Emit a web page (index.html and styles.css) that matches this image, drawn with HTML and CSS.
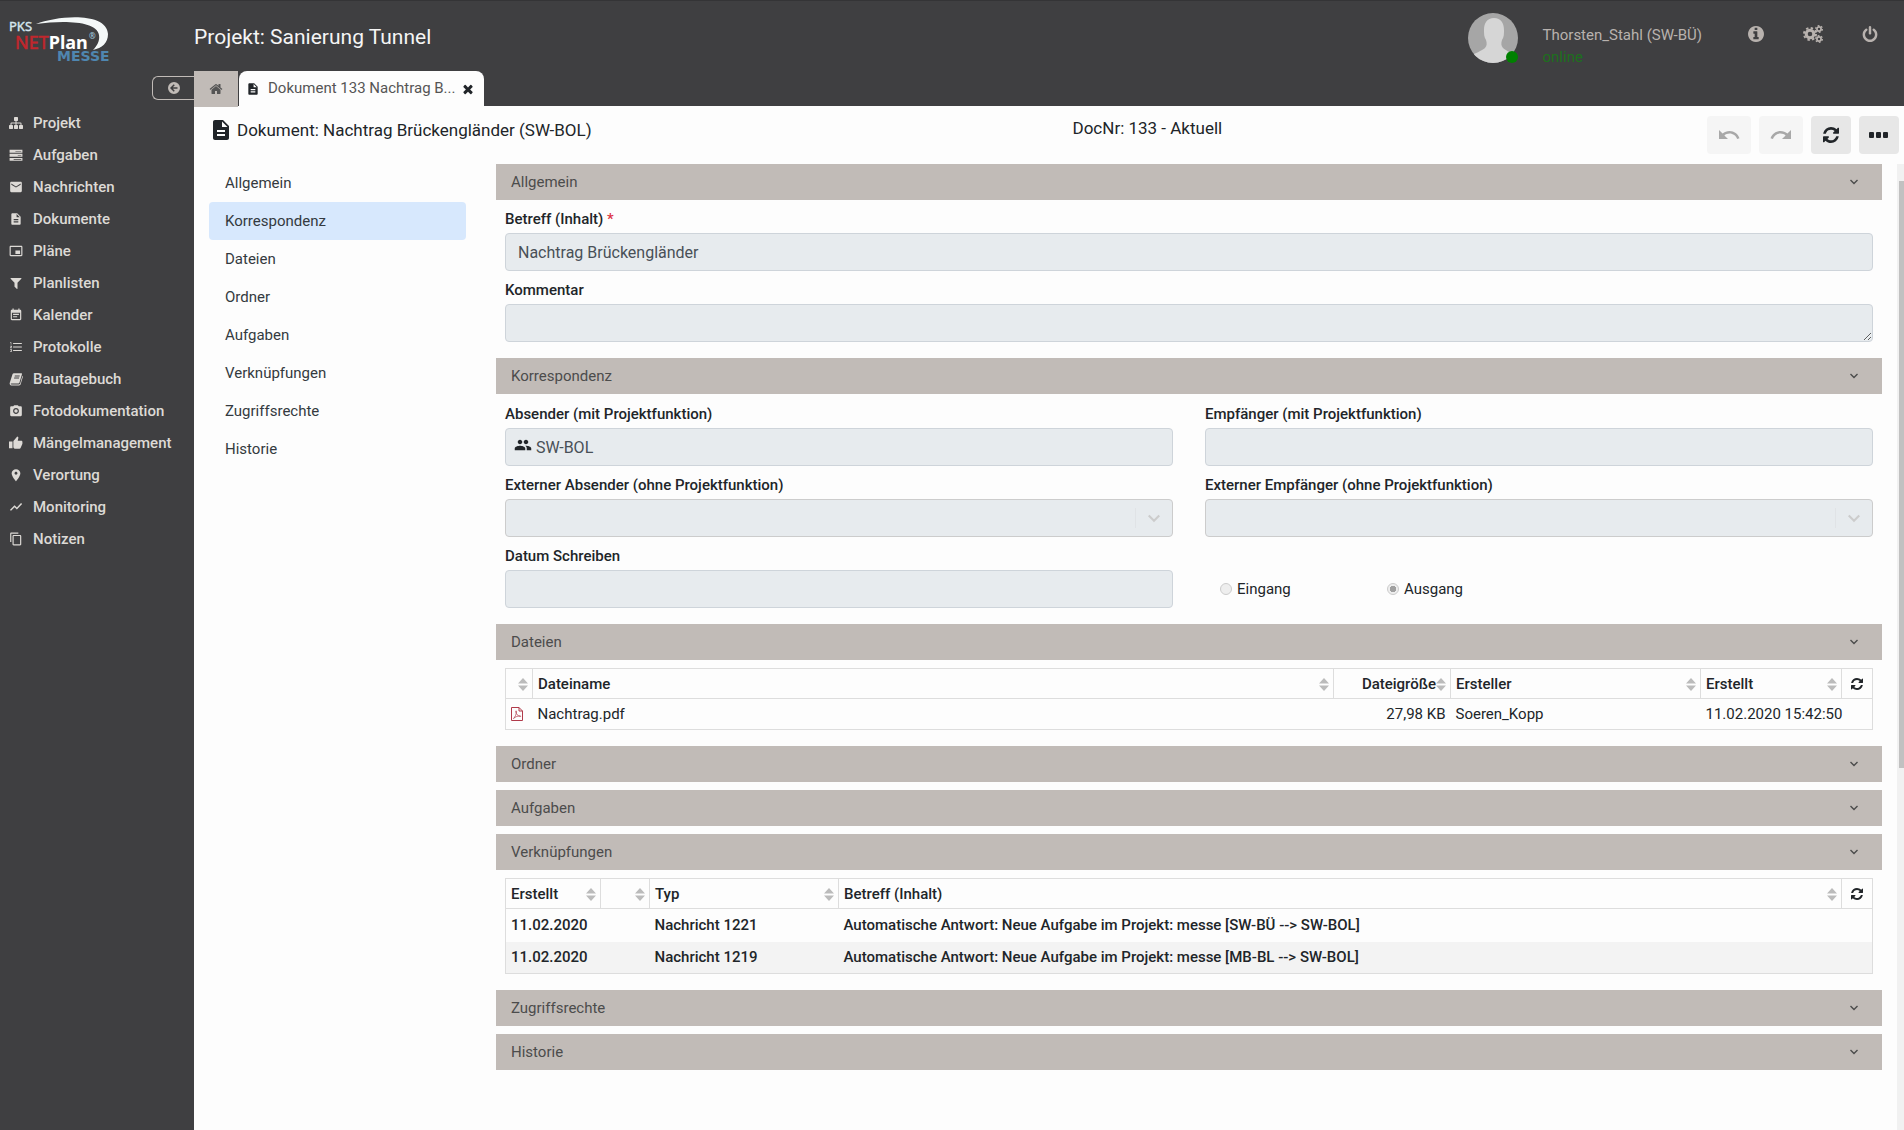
FILE: index.html
```html
<!DOCTYPE html>
<html lang="de">
	<head>
		<meta charset="UTF-8" />
		<meta name="viewport" content="width=device-width, initial-scale=1.0" />
		<title>Projekt: Sanierung Tunnel</title>
		<link rel="stylesheet" href="styles.css">
	</head>
	<body>
		<svg class="sprite" aria-hidden="true">
			<symbol id="sitemap" viewBox="0 0 1792 1792"><path d="M1792 1248v320q0 40-28 68t-68 28h-320q-40 0-68-28t-28-68v-320q0-40 28-68t68-28h96v-192h-512v192h96q40 0 68 28t28 68v320q0 40-28 68t-68 28h-320q-40 0-68-28t-28-68v-320q0-40 28-68t68-28h96v-192h-512v192h96q40 0 68 28t28 68v320q0 40-28 68t-68 28h-320q-40 0-68-28t-28-68v-320q0-40 28-68t68-28h96v-192q0-52 38-90t90-38h512v-192h-96q-40 0-68-28t-28-68v-320q0-40 28-68t68-28h320q40 0 68 28t28 68v320q0 40-28 68t-68 28h-96v192h512q52 0 90 38t38 90v192h96q40 0 68 28t28 68z" /></symbol>
			<symbol id="server" viewBox="0 0 24 24"><path fill-rule="evenodd" d="M1 3h22v5H1zM11 5h10v1H11zM1 10h22v5H1zM15 12h6v1h-6zM1 17h22v5H1zM8 19h13v1H8z" /></symbol>
			<symbol id="mail" viewBox="0 0 24 24"><path d="M20 3H4c-1.100 0-2 .9-2 2v14c0 1.100.9 2 2 2h16c1.100 0 2-.9 2-2V5c0-1.100-.9-2-2-2zm0 5l-8 5-8-5V6l8 5 8-5v2z" /></symbol>
			<symbol id="doc" viewBox="0 0 24 24"><path d="M14 2H6c-1.100 0-1.990.9-1.990 2L4 20c0 1.100.89 2 1.990 2H18c1.100 0 2-.9 2-2V8l-6-6zm2 16H8v-2h8v2zm0-4H8v-2h8v2zm-3-5V3.500L18.500 9H13z" /></symbol>
			<symbol id="plan" viewBox="0 0 24 24"><path d="M19 11h-8v6h8v-6zm4 8V4.980C23 3.880 22.100 3 21 3H3c-1.100 0-2 .88-2 1.980V19c0 1.100.9 2 2 2h18c1.100 0 2-.9 2-2zm-2 .02H3V4.970h18v14.050z" /></symbol>
			<symbol id="filter" viewBox="0 0 1792 1792"><path d="M1595 295q17 41-14 70l-493 493v742q0 42-39 59-13 5-25 5-27 0-45-19l-256-256q-19-19-19-45v-486l-493-493q-31-29-14-70 17-39 59-39h1280q42 0 59 39z" /></symbol>
			<symbol id="calendar" viewBox="0 0 24 24"><path d="M17 10H7v2h10v-2zm2-7h-1V1h-2v2H8V1H6v2H5c-1.110 0-1.990.9-1.990 2L3 19c0 1.100.89 2 2 2h14c1.100 0 2-.9 2-2V5c0-1.100-.9-2-2-2zm0 16H5V8h14v11zm-5-5H7v2h7v-2z" /></symbol>
			<symbol id="list" viewBox="0 0 24 24"><path d="M7 5h15v2H7zM7 11h15v2H7zM7 17h15v2H7zM2 4h2v4H3V5H2zM2 10h3v1.500L3.500 13H5v1H2v-1l1.500-2H2zM2 16h3v4H2v-1h2v-.5H3v-1h1V17H2z" /></symbol>
			<symbol id="book" viewBox="0 0 24 24"><path fill-rule="evenodd" d="M8.500 2H21c1 0 1.500.8 1.200 1.700L18 18c-.3 1-1 1.500-2 1.500H4c-.9 0-1.200.5-1 1 .2.600.7.800 1.300.800h13c.9 0 1.500-.5 1.800-1.400L23 6.500c.7.500.9 1.200.7 2L20 21c-.4 1.300-1.400 2-2.700 2H4c-2 0-3.400-2-2.800-4L6 4c.4-1.300 1.200-2 2.500-2zM10 6l-.4 1.500h8.500l.4-1.500zM9 9.500L8.600 11h8.500l.4-1.500z" /></symbol>
			<symbol id="camera" viewBox="0 0 24 24"><circle cx="12" cy="12" r="3" /><path d="M9 2L7.170 4H4c-1.100 0-2 .9-2 2v13c0 1.100.9 2 2 2h16c1.100 0 2-.9 2-2V6c0-1.100-.9-2-2-2h-3.170L15 2H9zm3 15c-2.760 0-5-2.240-5-5s2.240-5 5-5 5 2.240 5 5-2.240 5-5 5z" /></symbol>
			<symbol id="thumb" viewBox="0 0 24 24"><path d="M0 21h6V9.500H0V21zm23-11c0-1.100-.9-2-2-2h-6l1-4.570c.1-1-.1-1.400-.4-1.700L14.170 1 8 8c-.4.400-.5.800-.5 1.400V19c0 1.500.9 2.500 2.500 3h8c.83 0 1.540-.5 1.840-1.220l3.020-7.050c.09-.23.14-.47.14-.73v-3z" /></symbol>
			<symbol id="place" viewBox="0 0 24 24"><path d="M12 2C8 2 4.500 5.130 4.500 9.200 4.500 14.500 12 23 12 23s7.500-8.500 7.500-13.800C19.500 5.130 16 2 12 2zm0 9.500c-1.380 0-2.500-1.120-2.500-2.500s1.120-2.500 2.500-2.500 2.500 1.120 2.500 2.500-1.120 2.500-2.500 2.500z" /></symbol>
			<symbol id="chart" viewBox="0 0 24 24"><path d="M3.500 18.490l6-6.010 4 4L22.500 6.920l-1.910-1.910-7.090 7.970-4-4L1.500 16.990z" /></symbol>
			<symbol id="copy" viewBox="0 0 24 24"><path d="M16 1H4c-1.100 0-2 .9-2 2v14h2V3h12V1zm3 4H8c-1.100 0-2 .9-2 2v14c0 1.100.9 2 2 2h11c1.100 0 2-.9 2-2V7c0-1.100-.9-2-2-2zm0 16H8V7h11v14z" /></symbol>
			<symbol id="back" viewBox="0 0 24 24"><path fill-rule="evenodd" d="M12 0a12 12 0 1 1 0 24a12 12 0 1 1 0-24zM4 12l7.500 7.500 2-2-3.800-3.900H19v-3.200H9.700l3.800-3.900-2-2z" /></symbol>
			<symbol id="home" viewBox="0 0 1792 1792"><path d="M1472 992v480q0 26-19 45t-45 19h-384v-384h-256v384h-384q-26 0-45-19t-19-45v-480q0-1 .5-3t.5-3l575-474 575 474q1 2 1 6zm223-69l-62 74q-8 9-21 11h-3q-13 0-21-7l-692-577-692 577q-12 8-24 7-13-2-21-11l-62-74q-8-10-7-23.500t11-21.500l719-599q32-26 76-26t76 26l244 204v-195q0-14 9-23t23-9h192q14 0 23 9t9 23v408l219 182q10 8 11 21.500t-7 23.500z" /></symbol>
			<symbol id="times" viewBox="0 0 1792 1792"><path d="M1490 1322q0 40-28 68l-136 136q-28 28-68 28t-68-28l-294-294-294 294q-28 28-68 28t-68-28l-136-136q-28-28-28-68t28-68l294-294-294-294q-28-28-28-68t28-68l136-136q28-28 68-28t68 28l294 294 294-294q28-28 68-28t68 28l136 136q28 28 28 68t-28 68l-294 294 294 294q28 28 28 68z" /></symbol>
			<symbol id="info" viewBox="128 128 1536 1536"><path d="M1152 1376v-160q0-14-9-23t-23-9h-96v-512q0-14-9-23t-23-9h-320q-14 0-23 9t-9 23v160q0 14 9 23t23 9h96v320h-96q-14 0-23 9t-9 23v160q0 14 9 23t23 9h448q14 0 23-9t9-23zm-128-896v-160q0-14-9-23t-23-9h-192q-14 0-23 9t-9 23v160q0 14 9 23t23 9h192q14 0 23-9t9-23zm640 416q0 209-103 385.500t-279.500 279.500-385.500 103-385.500-103-279.500-279.500-103-385.500 103-385.500 279.500-279.500 385.500-103 385.500 103 279.500 279.500 103 385.500z" /></symbol>
			<symbol id="cogs" viewBox="0 0 20 18">
				<g fill="none" stroke="currentColor">
					<circle cx="7" cy="9" r="3.800" stroke-width="3" />
					<circle cx="7" cy="9" r="6" stroke-width="2" stroke-dasharray="2.400 2.310" />
					<circle cx="16" cy="4" r="2.100" stroke-width="1.700" />
					<circle cx="16" cy="4" r="3.400" stroke-width="1.200" stroke-dasharray="1.800 1.760" />
					<circle cx="16" cy="14" r="2.100" stroke-width="1.700" />
					<circle cx="16" cy="14" r="3.400" stroke-width="1.200" stroke-dasharray="1.800 1.760" />
				</g>
			</symbol>
			<symbol id="power" viewBox="128 0 1536 1664"><path d="M1664 896q0 156-61 298t-164 245-245 164-298 61-298-61-245-164-164-245-61-298q0-182 80.500-343t226.500-270q43-32 95.500-25t83.500 50q32 42 24.500 94.500t-49.500 84.500q-98 74-151.500 181t-53.500 228q0 104 40.500 198.500t109.500 163.500 163.500 109.500 198.500 40.500 198.500-40.500 163.500-109.500 109.500-163.500 40.500-198.500q0-121-53.500-228t-151.500-181q-42-32-49.500-84.500t24.500-94.500q31-43 84-50t95 25q146 109 226.500 270t80.500 343zm-640-768v640q0 52-38 90t-90 38-90-38-38-90v-640q0-52 38-90t90-38 90 38 38 90z" /></symbol>
			<symbol id="undo" viewBox="0 0 24 24"><path d="M12.500 8c-2.650 0-5.050.99-6.900 2.600L2 7v9h9l-3.620-3.620c1.390-1.160 3.160-1.880 5.120-1.880 3.540 0 6.550 2.310 7.600 5.500l2.370-.78C21.080 11.030 17.150 8 12.500 8z" /></symbol>
			<symbol id="redo" viewBox="0 0 24 24"><path d="M18.400 10.600C16.550 8.990 14.150 8 11.500 8c-4.650 0-8.580 3.030-9.960 7.220L3.900 16c1.050-3.190 4.050-5.500 7.600-5.500 1.950 0 3.730.72 5.120 1.880L13 16h9V7l-3.600 3.600z" /></symbol>
			<symbol id="refresh" viewBox="128 128 1536 1536"><path d="M1639 1056q0 5-1 7-64 268-268 434.500t-478 166.500q-146 0-282.500-55t-243.500-157l-129 129q-19 19-45 19t-45-19-19-45v-448q0-26 19-45t45-19h448q26 0 45 19t19 45-19 45l-137 137q71 66 161 102t187 36q134 0 250-65t186-179q11-17 53-117 8-23 30-23h192q13 0 22.500 9.500t9.500 22.500zm25-800v448q0 26-19 45t-45 19h-448q-26 0-45-19t-19-45 19-45l138-138q-148-137-349-137-134 0-250 65t-186 179q-11 17-53 117-8 23-30 23h-199q-13 0-22.500-9.500t-9.500-22.500v-7q65-268 270-434.500t480-166.500q146 0 284 55.500t245 156.500l130-129q19-19 45-19t45 19 19 45z" /></symbol>
			<symbol id="dots" viewBox="0 0 20 6"><rect x="0" y="0" width="5" height="6" rx="1" /><rect x="7" y="0" width="5" height="6" rx="1" /><rect x="14" y="0" width="5" height="6" rx="1" /></symbol>
			<symbol id="chevron" viewBox="0 0 8 6"><path fill="none" stroke="currentColor" stroke-width="1.400" d="M.5 1L4 4.500 7.500 1" /></symbol>
			<symbol id="sort" viewBox="0 0 10 13"><path d="M5 0l5 5.500H0zM5 13l5-5.500H0z" /></symbol>
			<symbol id="group" viewBox="0 4 24 16"><path d="M16 11c1.660 0 2.990-1.340 2.990-3S17.660 5 16 5c-1.660 0-3 1.340-3 3s1.340 3 3 3zm-8 0c1.660 0 2.990-1.340 2.990-3S9.660 5 8 5C6.340 5 5 6.340 5 8s1.340 3 3 3zm0 2c-2.330 0-7 1.170-7 3.500V19h14v-2.500c0-2.330-4.670-3.500-7-3.500zm8 0c-.29 0-.62.02-.97.05 1.160.84 1.970 1.970 1.970 3.450V19h6v-2.500c0-2.330-4.670-3.500-7-3.500z" /></symbol>
			<symbol id="pdf" viewBox="0 0 12 14"><path fill="none" stroke="currentColor" d="M.5.5h7.500L11.500 4v9.500H.5zM8 .5V4h3.500" /><path fill="none" stroke="currentColor" stroke-width=".7" d="M2.500 11.500C4 10 5.500 7 5.500 4.500c0-1-1-1-.8 0C5 7 7 9 9 9.500c1 .2 1-.7 0-.7-2 0-4.500.9-6.500 2.700z" /></symbol>
		</svg>

		<div class="app">
			<aside class="sidebar">
				<svg class="logo" viewBox="0 0 102 48" role="img" aria-label="PKS NETPlan Messe">
					<path fill="#f4f8f8" d="M27 8C50-1 98-4 99 18c0 9-6 14-15 16 4-4 7-9 6-15C88 5 55 4 27 8z" />
					<text class="logo-pks" x="0" y="15">PKS</text>
					<text class="logo-net" x="6" y="33">NET<tspan class="logo-plan">Plan</tspan></text>
					<text class="logo-reg" x="80" y="23">®</text>
					<text class="logo-messe" x="48" y="45">MESSE</text>
				</svg>
				<button class="collapse" type="button" aria-label="Menü einklappen"><svg class="i12"><use href="#back" /></svg></button>
				<nav class="menu">
					<a href="#" class="menu-item"><svg class="menu-icon"><use href="#sitemap" /></svg>Projekt</a>
					<a href="#" class="menu-item"><svg class="menu-icon"><use href="#server" /></svg>Aufgaben</a>
					<a href="#" class="menu-item"><svg class="menu-icon"><use href="#mail" /></svg>Nachrichten</a>
					<a href="#" class="menu-item"><svg class="menu-icon"><use href="#doc" /></svg>Dokumente</a>
					<a href="#" class="menu-item"><svg class="menu-icon"><use href="#plan" /></svg>Pläne</a>
					<a href="#" class="menu-item"><svg class="menu-icon"><use href="#filter" /></svg>Planlisten</a>
					<a href="#" class="menu-item"><svg class="menu-icon"><use href="#calendar" /></svg>Kalender</a>
					<a href="#" class="menu-item"><svg class="menu-icon"><use href="#list" /></svg>Protokolle</a>
					<a href="#" class="menu-item"><svg class="menu-icon"><use href="#book" /></svg>Bautagebuch</a>
					<a href="#" class="menu-item"><svg class="menu-icon"><use href="#camera" /></svg>Fotodokumentation</a>
					<a href="#" class="menu-item"><svg class="menu-icon"><use href="#thumb" /></svg>Mängelmanagement</a>
					<a href="#" class="menu-item"><svg class="menu-icon"><use href="#place" /></svg>Verortung</a>
					<a href="#" class="menu-item"><svg class="menu-icon"><use href="#chart" /></svg>Monitoring</a>
					<a href="#" class="menu-item"><svg class="menu-icon"><use href="#copy" /></svg>Notizen</a>
				</nav>
			</aside>

			<div class="main">
				<header class="topbar">
					<h1 class="project">Projekt: Sanierung Tunnel</h1>
					<div class="user">
						<div class="avatar">
							<svg class="avatar-in" viewBox="0 0 50 50"><path fill="#d6d6d6" d="M0 50V44c7-4 14-6 17-9 2-2 2-5 1-8-2-3-2-6-2-10C16 10 19 5 26 5s10 5 10 12c0 4 0 7-2 10-1 3-1 6 1 8 3 3 9 5 15 9v6z" /></svg>
							<span class="avatar-status"></span>
						</div>
						<div class="user-text">
							<div class="user-name">Thorsten_Stahl (SW-BÜ)</div>
							<div class="user-state">online</div>
						</div>
					</div>
					<div class="tools">
						<button type="button" class="tool" aria-label="Info"><svg class="i16"><use href="#info" /></svg></button>
						<button type="button" class="tool" aria-label="Einstellungen"><svg class="i20"><use href="#cogs" /></svg></button>
						<button type="button" class="tool" aria-label="Abmelden"><svg class="i16"><use href="#power" /></svg></button>
					</div>
				</header>
				<div class="tabs">
					<a href="#" class="tab-home" aria-label="Start"><svg class="i14"><use href="#home" /></svg></a>
					<div class="tab">
						<svg class="i14"><use href="#doc" /></svg>
						<span class="tab-text">Dokument 133 Nachtrag B...</span>
						<button type="button" class="tab-close" aria-label="Schließen"><svg class="i14"><use href="#times" /></svg></button>
					</div>
				</div>

				<div class="page">
					<div class="dochead">
						<h2 class="doc-title"><svg class="i24"><use href="#doc" /></svg>Dokument: Nachtrag Brückengländer (SW-BOL)</h2>
						<div class="doc-nr">DocNr: 133 - Aktuell</div>
						<div class="actions">
							<button type="button" class="action wide" disabled aria-label="Rückgängig"><svg class="i24"><use href="#undo" /></svg></button>
							<button type="button" class="action wide" disabled aria-label="Wiederholen"><svg class="i24"><use href="#redo" /></svg></button>
							<button type="button" class="action" aria-label="Aktualisieren"><svg class="i16"><use href="#refresh" /></svg></button>
							<button type="button" class="action" aria-label="Mehr"><svg class="i20"><use href="#dots" /></svg></button>
						</div>
					</div>

					<div class="content">
						<nav class="subnav">
							<a href="#allgemein" class="subnav-item">Allgemein</a>
							<a href="#korrespondenz" class="subnav-item active">Korrespondenz</a>
							<a href="#dateien" class="subnav-item">Dateien</a>
							<a href="#ordner" class="subnav-item">Ordner</a>
							<a href="#aufgaben" class="subnav-item">Aufgaben</a>
							<a href="#verknuepfungen" class="subnav-item">Verknüpfungen</a>
							<a href="#zugriffsrechte" class="subnav-item">Zugriffsrechte</a>
							<a href="#historie" class="subnav-item">Historie</a>
						</nav>

						<div class="sections">
							<section class="section" id="allgemein">
								<button type="button" class="section-head">Allgemein<svg class="chevron"><use href="#chevron" /></svg></button>
								<div class="section-body">
									<div class="field">
										<label class="label" for="betreff">Betreff (Inhalt) <span class="required">*</span></label>
										<input class="control" id="betreff" type="text" value="Nachtrag Brückengländer" readonly>
									</div>
									<div class="field">
										<label class="label" for="kommentar">Kommentar</label>
										<textarea class="control" id="kommentar" rows="1" readonly></textarea>
									</div>
								</div>
							</section>

							<section class="section" id="korrespondenz">
								<button type="button" class="section-head">Korrespondenz<svg class="chevron"><use href="#chevron" /></svg></button>
								<div class="section-body columns">
									<div class="field">
										<label class="label" for="absender">Absender (mit Projektfunktion)</label>
										<div class="control-wrap">
											<svg class="control-icon"><use href="#group" /></svg>
											<input class="control with-icon" id="absender" type="text" value="SW-BOL" readonly>
										</div>
									</div>
									<div class="field">
										<label class="label" for="empfaenger">Empfänger (mit Projektfunktion)</label>
										<input class="control" id="empfaenger" type="text" readonly>
									</div>
									<div class="field">
										<label class="label" for="ext-absender">Externer Absender (ohne Projektfunktion)</label>
										<div class="control-wrap">
											<select class="control" id="ext-absender" disabled><option></option></select>
											<span class="select-arrow"><svg class="select-icon"><use href="#chevron" /></svg></span>
										</div>
									</div>
									<div class="field">
										<label class="label" for="ext-empfaenger">Externer Empfänger (ohne Projektfunktion)</label>
										<div class="control-wrap">
											<select class="control" id="ext-empfaenger" disabled><option></option></select>
											<span class="select-arrow"><svg class="select-icon"><use href="#chevron" /></svg></span>
										</div>
									</div>
									<div class="field">
										<label class="label" for="datum">Datum Schreiben</label>
										<input class="control" id="datum" type="text" readonly>
									</div>
									<div class="radios">
										<label class="radio"><input class="radio-in" type="radio" name="richtung" disabled>Eingang</label>
										<label class="radio"><input class="radio-in" type="radio" name="richtung" checked disabled>Ausgang</label>
									</div>
								</div>
							</section>

							<section class="section" id="dateien">
								<button type="button" class="section-head">Dateien<svg class="chevron"><use href="#chevron" /></svg></button>
								<div class="section-body">
									<table class="table">
										<colgroup>
											<col class="col-icon"><col><col class="col-size"><col class="col-user"><col class="col-date"><col class="col-reload">
										</colgroup>
										<thead>
											<tr>
												<th><div class="th"><span></span><svg class="sort"><use href="#sort" /></svg></div></th>
												<th><div class="th">Dateiname<svg class="sort"><use href="#sort" /></svg></div></th>
												<th><div class="th end">Dateigröße<svg class="sort"><use href="#sort" /></svg></div></th>
												<th><div class="th">Ersteller<svg class="sort"><use href="#sort" /></svg></div></th>
												<th><div class="th">Erstellt<svg class="sort"><use href="#sort" /></svg></div></th>
												<th><button type="button" class="reload" aria-label="Neu laden"><svg class="i12"><use href="#refresh" /></svg></button></th>
											</tr>
										</thead>
										<tbody>
											<tr>
												<td><svg class="pdf"><use href="#pdf" /></svg></td>
												<td>Nachtrag.pdf</td>
												<td class="number">27,98 KB</td>
												<td>Soeren_Kopp</td>
												<td colspan="2">11.02.2020 15:42:50</td>
											</tr>
										</tbody>
									</table>
								</div>
							</section>

							<section class="section" id="ordner">
								<button type="button" class="section-head">Ordner<svg class="chevron"><use href="#chevron" /></svg></button>
							</section>
							<section class="section" id="aufgaben">
								<button type="button" class="section-head">Aufgaben<svg class="chevron"><use href="#chevron" /></svg></button>
							</section>

							<section class="section" id="verknuepfungen">
								<button type="button" class="section-head">Verknüpfungen<svg class="chevron"><use href="#chevron" /></svg></button>
								<div class="section-body">
									<table class="table unread">
										<colgroup>
											<col class="col-created"><col class="col-flag"><col class="col-type"><col><col class="col-reload">
										</colgroup>
										<thead>
											<tr>
												<th><div class="th">Erstellt<svg class="sort"><use href="#sort" /></svg></div></th>
												<th><div class="th"><span></span><svg class="sort"><use href="#sort" /></svg></div></th>
												<th><div class="th">Typ<svg class="sort"><use href="#sort" /></svg></div></th>
												<th><div class="th">Betreff (Inhalt)<svg class="sort"><use href="#sort" /></svg></div></th>
												<th><button type="button" class="reload" aria-label="Neu laden"><svg class="i12"><use href="#refresh" /></svg></button></th>
											</tr>
										</thead>
										<tbody>
											<tr>
												<td>11.02.2020</td>
												<td></td>
												<td>Nachricht 1221</td>
												<td colspan="2">Automatische Antwort: Neue Aufgabe im Projekt: messe [SW-BÜ --&gt; SW-BOL]</td>
											</tr>
											<tr>
												<td>11.02.2020</td>
												<td></td>
												<td>Nachricht 1219</td>
												<td colspan="2">Automatische Antwort: Neue Aufgabe im Projekt: messe [MB-BL --&gt; SW-BOL]</td>
											</tr>
										</tbody>
									</table>
								</div>
							</section>

							<section class="section" id="zugriffsrechte">
								<button type="button" class="section-head">Zugriffsrechte<svg class="chevron"><use href="#chevron" /></svg></button>
							</section>
							<section class="section" id="historie">
								<button type="button" class="section-head">Historie<svg class="chevron"><use href="#chevron" /></svg></button>
							</section>
						</div>

						<div class="scrollbar"><div class="scrollbar-thumb"></div></div>
					</div>
				</div>
			</div>
		</div>
	</body>
</html>
```
FILE: styles.css
```css
*,
*::before,
*::after {
	box-sizing: border-box;
}
body {
	margin: 0;
	background-color: #fdfdfd;
	color: #212529;
	font-family: Roboto, 'Liberation Sans', sans-serif;
	font-size: 15px;
	line-height: 21px;
}
a {
	color: inherit;
	text-decoration: none;
}
button {
	display: flex;
	align-items: center;
	justify-content: center;
	padding: 0;
	border: 0;
	background: none;
	color: inherit;
	font: inherit;
	cursor: pointer;
}
svg {
	display: block;
	flex: none;
	fill: currentColor;
}
.sprite {
	display: none;
}
.i12 {
	width: 12px;
	height: 12px;
}
.i14 {
	width: 14px;
	height: 14px;
}
.i16 {
	width: 16px;
	height: 16px;
}
.i20 {
	width: 20px;
	height: 18px;
}
.i24 {
	width: 24px;
	height: 24px;
}
.app {
	display: flex;
	min-height: 100vh;
	border-top: 1px solid #343436;
	background-color: #3f3f41;
}

/* sidebar */
.sidebar {
	display: flex;
	flex: none;
	flex-direction: column;
	width: 194px;
	color: #dddad6;
}
.logo {
	width: 102px;
	height: 48px;
	margin: 15px 0 12px 9px;
	overflow: visible;
}
.logo-pks {
	fill: #d5e6ee;
	stroke: #d5e6ee;
	stroke-width: 0.4;
	font: 13px 'Noto Sans', sans-serif;
}
.logo-net {
	fill: #c1272d;
	stroke: #c1272d;
	stroke-width: 0.6;
	font: 18px 'Noto Sans', sans-serif;
}
.logo-plan {
	fill: #ffffff;
	stroke: none;
	font-weight: bold;
}
.logo-reg {
	fill: #a9cfe0;
	font: 8px 'Noto Sans', sans-serif;
}
.logo-messe {
	fill: #4f86b0;
	font: bold 14px 'DejaVu Sans', sans-serif;
}
.collapse {
	align-self: flex-end;
	width: 42px;
	height: 24px;
	border: 1px solid #c1bbb7;
	border-right: 0;
	border-radius: 6px 0 0 6px;
	color: #c1bbb7;
}
.menu {
	margin-top: 7px;
}
.menu-item {
	display: flex;
	align-items: center;
	gap: 9px;
	height: 32px;
	padding-left: 8px;
	font-weight: 500;
}
.menu-icon {
	width: 16px;
	height: 14px;
}

/* top bar */
.main {
	display: flex;
	flex: 1;
	flex-direction: column;
	min-width: 0;
}
.topbar {
	display: flex;
	align-items: flex-start;
	height: 70px;
	color: #b8b2ae;
}
.project {
	flex: 1;
	margin: 22px 0 0;
	color: #f5f5f5;
	font-size: 21px;
	font-weight: 400;
	line-height: 28px;
}
.user {
	display: flex;
	gap: 25px;
	padding-top: 12px;
}
.avatar {
	position: relative;
	width: 50px;
	height: 50px;
}
.avatar-in {
	width: 50px;
	height: 50px;
	border-radius: 50%;
	background-color: #a6a6a6;
}
.avatar-status {
	position: absolute;
	right: 0;
	bottom: 0;
	width: 12px;
	height: 12px;
	border-radius: 50%;
	background-color: #008000;
}
.user-text {
	padding-top: 11px;
	line-height: 22px;
}
.user-state {
	color: #1d701d;
}
.tools {
	display: flex;
	gap: 39px;
	padding: 24px 26px 0 46px;
}
.tool {
	height: 18px;
}
.tabs {
	display: flex;
	align-items: flex-start;
	gap: 1px;
	height: 35px;
}
.tab-home {
	display: flex;
	align-items: center;
	justify-content: center;
	z-index: 1;
	width: 44px;
	height: 36px;
	background-color: #c1bbb7;
	color: #555555;
}
.tab {
	display: flex;
	align-items: center;
	gap: 8px;
	width: 245px;
	height: 35px;
	padding: 0 9px 0 7px;
	border-radius: 8px 8px 0 0;
	background-color: #fdfdfd;
}
.tab-text {
	flex: 1;
	min-width: 0;
	color: #555555;
	line-height: 23px;
	white-space: nowrap;
}

/* document */
.page {
	display: flex;
	flex: 1;
	flex-direction: column;
	background-color: #fdfdfd;
}
.dochead {
	display: grid;
	grid-template-columns: 50% 1fr auto;
	height: 58px;
	padding-right: 5px;
	font-size: 17px;
}
.doc-title {
	display: flex;
	align-items: center;
	gap: 4px;
	height: 44px;
	margin: 2px 0 0 15px;
	font-size: 17px;
	font-weight: 400;
}
.doc-nr {
	padding: 12px 0 0 26px;
}
.actions {
	display: flex;
	gap: 8px;
	padding-top: 10px;
}
.action {
	width: 40px;
	height: 38px;
	border-radius: 4px;
	background-color: #e7e7e7;
}
.action.wide {
	width: 44px;
}
.action:disabled {
	background-color: #f5f5f5;
	color: #a8a8a8;
}
.content {
	display: flex;
	flex: 1;
	padding-left: 15px;
}
.subnav {
	flex: none;
	width: 257px;
	margin-right: 30px;
}
.subnav-item {
	display: flex;
	align-items: center;
	height: 38px;
	padding: 0 16px;
	border-radius: 4px;
	color: #343a40;
}
.subnav-item.active {
	background-color: #d7e8fd;
}
.sections {
	flex: 1;
	min-width: 0;
	padding-bottom: 50px;
}
.section {
	margin-bottom: 8px;
}
.section-head {
	justify-content: space-between;
	width: 100%;
	height: 36px;
	padding: 0 24px 0 15px;
	background-color: #c1bbb7;
	color: #4c4c4c;
}
.chevron {
	width: 8px;
	height: 6px;
}
.section-body {
	padding: 8px 9px;
}
.field {
	margin-bottom: 8px;
}
.field:last-child {
	margin-bottom: 0;
}
.columns {
	display: grid;
	grid-template-columns: 1fr 1fr;
	column-gap: 32px;
	padding: 9px 9px 0;
}
.label {
	display: block;
	margin-bottom: 2px;
	font-weight: 500;
	line-height: 23px;
}
.required {
	color: #dc3545;
}
.control {
	display: block;
	width: 100%;
	height: 38px;
	padding: 0 12px;
	border: 1px solid #ced4da;
	border-radius: 4px;
	outline: 0;
	background-color: #e7ebee;
	color: #495057;
	font: 16px Roboto, 'Liberation Sans', sans-serif;
	appearance: none;
}
textarea.control {
	padding: 8px 12px;
	overflow: hidden;
	resize: vertical;
}
select.control {
	border-color: #cccccc;
	opacity: 1;
}
.control-wrap {
	position: relative;
}
.control-icon {
	position: absolute;
	top: 11px;
	left: 9px;
	width: 18px;
	height: 12px;
}
.control.with-icon {
	padding-left: 30px;
}
.select-arrow {
	position: absolute;
	top: 9px;
	right: 1px;
	display: flex;
	align-items: center;
	justify-content: center;
	width: 37px;
	height: 20px;
	border-left: 1px solid #e0e3e6;
	color: #cccccc;
}
.select-icon {
	width: 12px;
	height: 9px;
}
.radios {
	display: grid;
	grid-template-columns: repeat(4, 1fr);
	align-items: center;
	height: 38px;
	margin-top: 25px;
}
.radio {
	display: flex;
	align-items: center;
	gap: 5px;
	padding-left: 15px;
}
.radio-in {
	width: 12px;
	height: 12px;
	margin: 0;
	border: 1px solid #cccccc;
	border-radius: 50%;
	background-color: #eeeeee;
	appearance: none;
}
.radio-in:checked {
	background-image: radial-gradient(circle, #a0a0a0 3px, transparent 3px);
}

/* tables */
.table {
	width: 100%;
	border: 1px solid #dddddd;
	border-collapse: collapse;
	table-layout: fixed;
}
.table th,
.table td {
	height: 31px;
	padding: 0 5px;
	text-align: left;
	white-space: nowrap;
}
.table th {
	height: 30px;
	padding-top: 1px;
	border: 1px solid #dddddd;
	font-weight: 500;
}
.table .number {
	text-align: right;
}
.table.unread td {
	height: 32px;
	font-weight: 500;
}
.table.unread tr:first-child td {
	height: 33px;
}
.table tbody tr:nth-child(even) {
	background-color: #f3f3f3;
}
.th {
	display: flex;
	align-items: center;
	justify-content: space-between;
}
.th.end {
	justify-content: flex-end;
}
.sort {
	width: 10px;
	height: 13px;
	margin-right: -1px;
	color: #bbbbbb;
}
.reload {
	width: 100%;
}
.pdf {
	width: 12px;
	height: 14px;
	color: #b03a4a;
}
.col-icon {
	width: 27px;
}
.col-size {
	width: 117px;
}
.col-user {
	width: 250px;
}
.col-date {
	width: 141px;
}
.col-reload {
	width: 31px;
}
.col-created {
	width: 95px;
}
.col-flag {
	width: 49px;
}
.col-type {
	width: 189px;
}

/* scrollbar */
.scrollbar {
	width: 7px;
	margin-left: 15px;
	padding: 17px 0 17px 2px;
	background-color: #f1f1f1;
}
.scrollbar-thumb {
	height: 63%;
	background-color: #c1c1c1;
}
```
